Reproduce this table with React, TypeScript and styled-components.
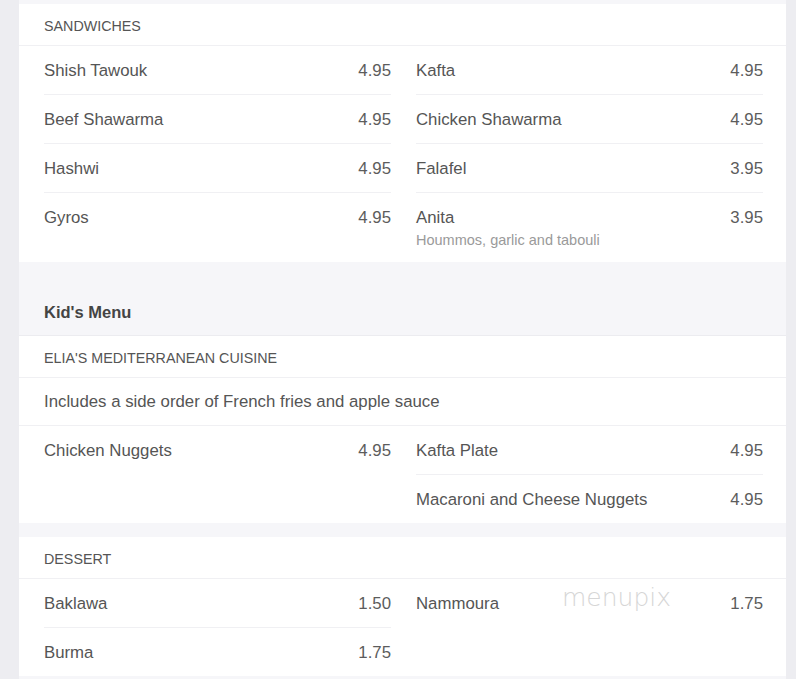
import React from 'react';
import styled, { createGlobalStyle } from 'styled-components';

const GlobalStyle = createGlobalStyle`
  body {
    margin: 0;
    background-color: #ededf1;
    font-family: "Liberation Sans", Arial, sans-serif;
  }
`;

const Page = styled.div`
  margin-left: 19px;
  width: 767px;
  background-color: #f6f6f9;
  padding: 4px 0 40px;
  display: flex;
  flex-direction: column;
`;

const Card = styled.section`
  position: relative;
  background-color: #fff;
  margin-bottom: 14px;
`;

const CategoryTitle = styled.h2`
  margin: 0;
  padding: 26px 25px 13px;
  font-size: 16.5px;
  line-height: 20px;
  font-weight: bold;
  color: #444;
  border-bottom: 1px solid #ececf0;
`;

const SectionHeader = styled.div`
  padding: 12px 25px 9px;
  font-size: 14.3px;
  line-height: 20px;
  text-transform: uppercase;
  color: #555;
  border-bottom: 1px solid #f0f0f3;
`;

const SectionNote = styled.div`
  padding: 14px 25px 13px;
  font-size: 16.8px;
  line-height: 20px;
  color: #555;
  border-bottom: 1px solid #f0f0f3;
`;

const Columns = styled.div`
  display: grid;
  grid-template-columns: 1fr 1fr;
  gap: 25px;
  padding: 0 23px 0 25px;
`;

const Column = styled.div`
  display: flex;
  flex-direction: column;
`;

const Item = styled.div`
  display: flex;
  justify-content: space-between;
  padding: 15px 0 13px;
  font-size: 16.8px;
  line-height: 20px;
  color: #555;

  & + & {
    border-top: 1px solid #f0f0f3;
  }
`;

const ItemName = styled.div`
  display: flex;
  flex-direction: column;
`;

const ItemDesc = styled.span`
  margin-top: 3px;
  font-size: 14.5px;
  line-height: 18px;
  color: #9a9a9a;
`;

const Price = styled.span`
  color: #5c5c5c;
`;

const Watermark = styled.span`
  position: absolute;
  left: 543px;
  top: 46px;
  font-family: "DejaVu Sans", sans-serif;
  font-weight: 200;
  font-size: 25px;
  color: #d6d6d6;
  pointer-events: none;
`;

interface MenuItem {
  name: string;
  price: string;
  desc?: string;
}

interface Section {
  category?: string;
  header: string;
  note?: string;
  left: MenuItem[];
  right: MenuItem[];
  watermark?: boolean;
}

const sections: Section[] = [
  {
    header: 'Sandwiches',
    left: [
      { name: 'Shish Tawouk', price: '4.95' },
      { name: 'Beef Shawarma', price: '4.95' },
      { name: 'Hashwi', price: '4.95' },
      { name: 'Gyros', price: '4.95' },
    ],
    right: [
      { name: 'Kafta', price: '4.95' },
      { name: 'Chicken Shawarma', price: '4.95' },
      { name: 'Falafel', price: '3.95' },
      { name: 'Anita', price: '3.95', desc: 'Hoummos, garlic and tabouli' },
    ],
  },
  {
    category: "Kid's Menu",
    header: "Elia's Mediterranean Cuisine",
    note: 'Includes a side order of French fries and apple sauce',
    left: [{ name: 'Chicken Nuggets', price: '4.95' }],
    right: [
      { name: 'Kafta Plate', price: '4.95' },
      { name: 'Macaroni and Cheese Nuggets', price: '4.95' },
    ],
  },
  {
    header: 'Dessert',
    left: [
      { name: 'Baklawa', price: '1.50' },
      { name: 'Burma', price: '1.75' },
    ],
    right: [{ name: 'Nammoura', price: '1.75' }],
    watermark: true,
  },
];

const renderItems = (items: MenuItem[]) =>
  items.map((item, index) => (
    <Item key={index}>
      <ItemName>
        {item.name}
        {item.desc && <ItemDesc>{item.desc}</ItemDesc>}
      </ItemName>
      <Price>{item.price}</Price>
    </Item>
  ));

const App: React.FC = () => {
  return (
    <>
      <GlobalStyle />
      <Page>
        {sections.map((section, index) => (
          <React.Fragment key={index}>
            {section.category && <CategoryTitle>{section.category}</CategoryTitle>}
            <Card>
              <SectionHeader>{section.header}</SectionHeader>
              {section.note && <SectionNote>{section.note}</SectionNote>}
              <Columns>
                <Column>{renderItems(section.left)}</Column>
                <Column>{renderItems(section.right)}</Column>
              </Columns>
              {section.watermark && <Watermark>menupix</Watermark>}
            </Card>
          </React.Fragment>
        ))}
      </Page>
    </>
  );
};

export default App;
